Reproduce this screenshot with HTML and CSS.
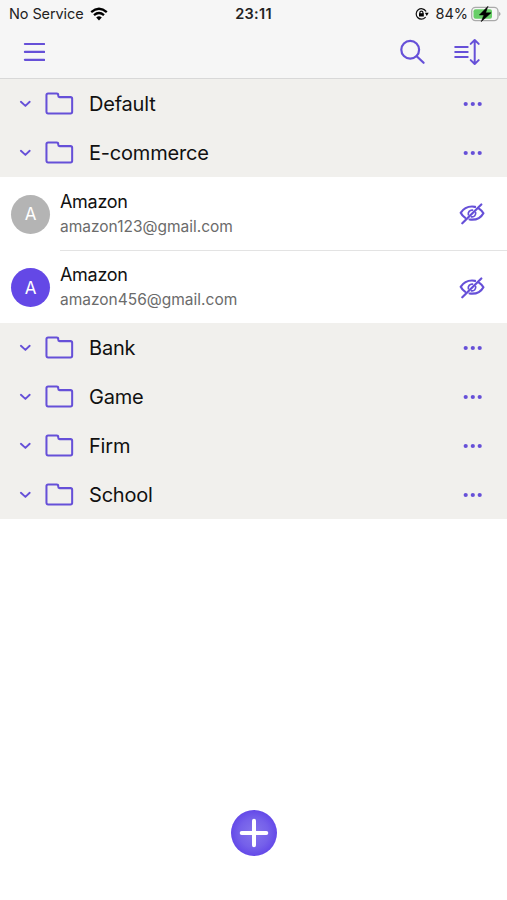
FILE: index.html
```html
<!DOCTYPE html>
<html lang="en">
<head>
<meta charset="utf-8">
<meta name="viewport" content="width=device-width, initial-scale=1">
<title>Accounts</title>
<link rel="stylesheet" href="styles.css">
</head>
<body>
<svg class="sprite" aria-hidden="true">
  <symbol id="chevron" viewBox="0 0 12 8"><path d="M1.900 1.800 6.400 5.900l4.300-4.100"/></symbol>
  <symbol id="folder" viewBox="0 0 30 24"><path d="M3.200 1.500h8.900q1.600 0 1.600 1.500v.9q0 1.400 1.400 1.400h11.300q1.700 0 1.700 1.700v13.500q0 1.700-1.700 1.700H3.200q-1.700 0-1.700-1.700V3.200q0-1.700 1.700-1.700Z"/></symbol>
  <symbol id="dots" viewBox="0 0 20 6"><circle cx="2.700" cy="3" r="2.100"/><circle cx="9.800" cy="3" r="2.100"/><circle cx="16.700" cy="3" r="2.100"/></symbol>
  <symbol id="eye-off" viewBox="0 0 26 22"><path d="M16 3.900Q14.500 3.500 13 3.500C7.800 3.500 3.800 6.500 1.700 9.800c1 1.900 2.400 3.600 4.300 4.900M20.300 5.800c1.700 1.100 3.100 2.600 4.100 4.400-2.300 4.200-6.200 6.500-11.200 6.500q-1.300 0-2.600-.2M22.300 1.500 3.300 20.300"/><path class="thin" d="M13.500 7.100c-2.700-.3-4.800 2-4.100 4.700M16.600 9.400c.7 2.600-1.500 4.900-4.100 4.500"/></symbol>
</svg>

<header class="top">
  <div class="status">
    <div class="carrier"><span>No Service</span>
      <svg class="wifi" viewBox="0 0 18 14"><path d="M1.200 5.100q7.800-6.800 15.600 0M4 8.100q5-4.300 10 0"/><path class="fill" d="M6.200 10.400q2.800-2.300 5.600 0L9 13.400Z"/></svg>
    </div>
    <div class="time">23:11</div>
    <div class="power">
      <svg class="lock" viewBox="0 0 14 12"><path d="M10.300 9.400a5.200 5.200 0 1 1 .5-6.300"/><path d="M4.900 5.500V4.600a1.500 1.500 0 0 1 3 0v.9"/><path class="fill" d="M4 5.200h4.800v3.300H4ZM9.900 4.800h3.800l-1.900 3.100Z"/></svg>
      <span>84%</span>
      <svg class="battery" viewBox="0 0 31 16"><rect class="shell" x=".7" y="1.400" width="26.300" height="13.200" rx="3.800"/><rect class="charge" x="2.500" y="3.200" width="18.500" height="9.600" rx="2"/><path class="tip" d="M28 5.800q3.200 2.200 0 4.400Z"/><path class="bolt" d="M16.800.4 8.300 9h4.600l-2.700 6.700 9.900-8.900h-5.300Z"/></svg>
    </div>
  </div>
  <nav class="tools">
    <svg class="menu" viewBox="0 0 22 20"><path d="M1.900 2h19.300M1.900 9.900h19.300M1.900 17.800h19.300"/></svg>
    <svg class="search" viewBox="0 0 26 26"><circle cx="10.200" cy="10.700" r="8.900"/><path d="m16.700 17.200 6.900 6.600"/></svg>
    <svg class="sort" viewBox="0 0 28 28"><path d="M1.200 9h12.500M1.200 14h12.500M1.200 19h12.500"/><path d="M20.700 2.500v23M16.700 5.900l4-3.900 4 3.900M16.700 22.100l4 3.900 4-3.900"/></svg>
  </nav>
</header>

<main>
  <section class="group">
    <div class="folder"><svg class="chevron"><use href="#chevron"/></svg><svg class="icon"><use href="#folder"/></svg><span>Default</span><svg class="dots"><use href="#dots"/></svg></div>
    <div class="folder"><svg class="chevron"><use href="#chevron"/></svg><svg class="icon"><use href="#folder"/></svg><span>E-commerce</span><svg class="dots"><use href="#dots"/></svg></div>
  </section>
  <section class="accounts">
    <article class="account">
      <div class="avatar">A</div>
      <div class="details"><div class="name">Amazon</div><div class="mail">amazon123@gmail.com</div></div>
      <svg class="eye"><use href="#eye-off"/></svg>
    </article>
    <article class="account">
      <div class="avatar active">A</div>
      <div class="details"><div class="name">Amazon</div><div class="mail">amazon456@gmail.com</div></div>
      <svg class="eye"><use href="#eye-off"/></svg>
    </article>
  </section>
  <section class="group">
    <div class="folder"><svg class="chevron"><use href="#chevron"/></svg><svg class="icon"><use href="#folder"/></svg><span>Bank</span><svg class="dots"><use href="#dots"/></svg></div>
    <div class="folder"><svg class="chevron"><use href="#chevron"/></svg><svg class="icon"><use href="#folder"/></svg><span>Game</span><svg class="dots"><use href="#dots"/></svg></div>
    <div class="folder"><svg class="chevron"><use href="#chevron"/></svg><svg class="icon"><use href="#folder"/></svg><span>Firm</span><svg class="dots"><use href="#dots"/></svg></div>
    <div class="folder"><svg class="chevron"><use href="#chevron"/></svg><svg class="icon"><use href="#folder"/></svg><span>School</span><svg class="dots"><use href="#dots"/></svg></div>
  </section>
</main>

<footer>
  <button class="add" aria-label="Add"><svg viewBox="0 0 46 46"><path d="M23 10.700v24.600M10.700 23h24.600"/></svg></button>
</footer>
</body>
</html>
```
FILE: styles.css
```css
* { box-sizing: border-box; }

body {
  margin: 0;
  height: 900px;
  display: flex;
  flex-direction: column;
  background: #fff;
  color: #111;
  font-family: Inter, "Liberation Sans", sans-serif;
  overflow: hidden;
}

svg {
  display: block;
  flex: none;
  fill: none;
  stroke: #6650d8;
  stroke-width: 2.2;
  stroke-linecap: round;
  stroke-linejoin: round;
}

.sprite { display: none; }

.top {
  height: 79px;
  background: #f6f6f6;
  border-bottom: 1px solid #d8d8d8;
}

.status {
  height: 27px;
  display: grid;
  grid-template-columns: 1fr auto 1fr;
  padding: 0 6px 0 9px;
  align-items: center;
  font-size: 14.500px;
  color: #222;
}

.carrier, .power { display: flex; align-items: center; }
.carrier { gap: 6px; letter-spacing: -.1px; }
.power { justify-content: flex-end; }
.time { margin-right: 3px; font-weight: 600; letter-spacing: .3px; }

.wifi { width: 18px; height: 14px; stroke: #000; stroke-width: 2.3; stroke-linecap: butt; }
.wifi .fill, .lock .fill { fill: #000; stroke: none; }
.lock { width: 14px; height: 12px; margin-right: 6px; stroke: #111; stroke-width: 1.2; }
.battery { width: 31px; height: 16px; margin: 0 -1px 0 3px; stroke: none; }
.battery .shell { stroke: #aaa; stroke-width: 1.3; }
.battery .charge { fill: #67ce67; }
.battery .tip { fill: #aaa; }
.battery .bolt { fill: #000; stroke: #000; stroke-width: .5; }

.tools { display: flex; align-items: center; height: 50px; padding: 0 25px 0 23px; }
.menu { width: 22px; height: 20px; margin-right: auto; }
.search { width: 26px; height: 26px; margin-right: 28px; }
.sort { width: 28px; height: 28px; stroke-width: 2; }

.group { background: #f1f0ed; }

.folder {
  height: 49px;
  display: flex;
  align-items: center;
  padding: 1px 24px 0 19px;
  font-size: 20px;
  letter-spacing: -.2px;
}

.chevron { width: 12px; height: 8px; margin-right: 14px; stroke-width: 1.900; }
.icon { width: 29px; height: 23.200px; margin-right: 15px; stroke-width: 2.1; }
.dots { width: 20px; height: 6px; margin-left: auto; fill: #6650d8; stroke: none; }

.account {
  height: 73px;
  display: flex;
  align-items: center;
  padding: 1px 22px 0 11px;
}
.account + .account {
  padding-top: 2px;
  background: linear-gradient(#e3e3e3, #e3e3e3) 60px 0 / 100% 1px no-repeat;
}

.avatar {
  width: 39px;
  height: 39px;
  margin-right: 10px;
  border-radius: 50%;
  display: grid;
  place-items: center;
  background: #b4b4b4;
  color: #fff;
  font-size: 17px;
}
.avatar.active { background: #6448e6; }

.name { font-size: 18px; line-height: 24px; letter-spacing: -.3px; }
.mail { font-size: 15.500px; line-height: 25px; color: #6b6b6b; }
.eye { width: 26px; height: 22px; margin-left: auto; }
.thin { stroke-width: 1.700; }

footer { margin-top: auto; padding: 0 0 44px; display: flex; justify-content: center; }
.add {
  width: 46px;
  height: 46px;
  padding: 0;
  border: 0;
  border-radius: 50%;
  background: radial-gradient(circle, #8675ec 0, #7560ea 45%, #6145e8 75%);
}
.add svg { stroke: #fff; stroke-width: 4; }
```
